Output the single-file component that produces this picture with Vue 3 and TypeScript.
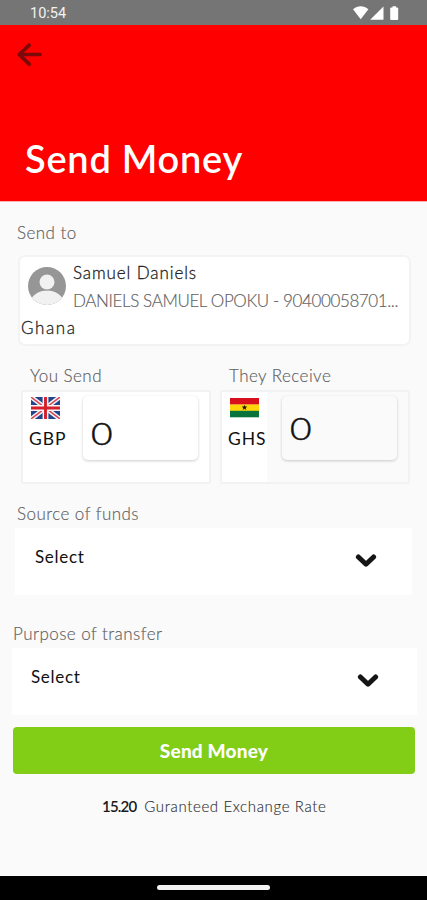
<script setup lang="ts">
import { ref } from 'vue'

interface Choice {
  id: string
  label: string
  value: string
}

const recipient = {
  name: 'Samuel Daniels',
  account: 'DANIELS SAMUEL OPOKU - 90400058701...',
  country: 'Ghana',
}
const sendAmount = ref('0')
const receiveAmount = ref('0')
const choices: Choice[] = [
  { id: 'source', label: 'Source of funds', value: 'Select' },
  { id: 'purpose', label: 'Purpose of transfer', value: 'Select' },
]
</script>

<template>
  <div class="screen">
    <div class="status">
      <span class="clock">10:54</span>
      <svg class="signals" width="50" height="16" viewBox="0 0 50 16">
        <path d="M0 4.200C4.500 0.200 10.900 0.200 15.400 4.200L7.700 14.200Z" />
        <path d="M30.500 1.500v13.200H17.200Z" />
        <path d="M39.500 1.300h3.500v1.200h1.200q1 0 1 1V14q0 1-1 1h-6q-1 0-1-1V3.500q0-1 1-1h1.300Z" />
      </svg>
    </div>

    <header class="header">
      <button class="back" aria-label="Back">
        <svg width="26" height="24" viewBox="0 0 26 24">
          <path d="M13.200 2.200L3.200 11.500L13.200 21.200M3.600 11.500H24" />
        </svg>
      </button>
      <h1 class="title"><span>Send Money</span></h1>
    </header>

    <main class="body">
      <div class="label send-to"><span>Send to</span></div>
      <section class="recipient">
        <div class="person">
          <svg class="avatar" width="38" height="38" viewBox="0 0 38 38">
            <defs><clipPath id="disc"><circle cx="19" cy="19" r="19" /></clipPath></defs>
            <g clip-path="url(#disc)">
              <rect width="38" height="38" fill="#969696" />
              <ellipse cx="19" cy="37" rx="17" ry="13.500" fill="#f1f1f1" />
              <circle cx="19" cy="15" r="8.500" fill="#969696" />
              <circle cx="19" cy="15" r="7.500" fill="#f1f1f1" />
            </g>
          </svg>
          <div class="details">
            <div class="name"><span>{{ recipient.name }}</span></div>
            <div class="account"><span>{{ recipient.account }}</span></div>
          </div>
        </div>
        <div class="country"><span>{{ recipient.country }}</span></div>
      </section>

      <div class="amounts">
        <section class="side">
          <div class="label amount-label"><span class="you">You Send</span></div>
          <div class="money">
            <div class="currency">
              <svg class="flag" width="29" height="22" viewBox="0 0 30 22" preserveAspectRatio="none">
                <rect width="30" height="22" fill="#21468f" />
                <path d="M0 0L30 22M30 0L0 22" stroke="#f4f4fa" stroke-width="4.600" />
                <path d="M0 0L30 22M30 0L0 22" stroke="#d64850" stroke-width="1.500" />
                <path d="M15 0V22M0 11H30" stroke="#f8f4f8" stroke-width="6" />
                <path d="M15 0V22M0 11H30" stroke="#d51f2b" stroke-width="3" />
              </svg>
              <span class="code gbp">GBP</span>
            </div>
            <div class="amount sent"><span class="figure">{{ sendAmount }}</span></div>
          </div>
        </section>
        <section class="side">
          <div class="label amount-label"><span class="they">They Receive</span></div>
          <div class="money receiving">
            <div class="currency">
              <svg class="flag" width="30" height="22" viewBox="0 0 30 22">
                <rect y="1" width="29" height="6.700" fill="#d8101c" />
                <rect y="7.500" width="29" height="6.500" fill="#ffd50a" />
                <rect y="13.800" width="29" height="6.500" fill="#08733b" />
                <path d="M14.500 7.900l.8 1.700h2l-1.600 1.300.6 2-1.800-1.200-1.800 1.200.6-2-1.600-1.300h2Z" fill="#1d1804" />
              </svg>
              <span class="code ghs">GHS</span>
            </div>
            <div class="amount received"><span class="figure">{{ receiveAmount }}</span></div>
          </div>
        </section>
      </div>

      <section v-for="choice in choices" :key="choice.id" class="choice" :class="choice.id">
        <div class="label"><span>{{ choice.label }}</span></div>
        <div class="select">
          <span class="value">{{ choice.value }}</span>
          <svg class="chevron" width="22" height="17" viewBox="0 0 22 17">
            <path d="M3.400 4L11 11.200L18.600 4" />
          </svg>
        </div>
      </section>

      <button class="submit"><span>Send Money</span></button>
      <p class="rate"><strong>15.20</strong><span>Guranteed Exchange Rate</span></p>
    </main>

    <footer class="nav"><i class="pill"></i></footer>
  </div>
</template>

<style>
body {
  margin: 0;
  background: #fafafa;
}
</style>

<style scoped>
.screen {
  width: 427px;
  height: 900px;
  display: flex;
  flex-direction: column;
  overflow: hidden;
  background: #fafafa;
  color: #111;
  font-family: Lato, "Liberation Sans", sans-serif;
  white-space: nowrap;
}
.screen * {
  box-sizing: border-box;
}
button {
  border: 0;
  padding: 0;
  background: none;
  font-family: inherit;
}
.status {
  height: 25px;
  flex: none;
  display: flex;
  justify-content: space-between;
  padding: 5px 24px 0 30px;
  background: #757575;
}
.clock {
  color: #f2f2f2;
  font: 14.500px/18px Roboto, sans-serif;
}
.signals {
  fill: #fff;
}
.header {
  height: 177px;
  flex: none;
  display: flex;
  flex-direction: column;
  justify-content: space-between;
  padding: 18px 16px 20px;
  background: #fe0000;
  border-bottom: 1px solid #ffb0b0;
}
.back {
  width: 26px;
  height: 24px;
}
.back svg {
  display: block;
  fill: none;
  stroke: #7c0808;
  stroke-width: 3.700;
  stroke-linecap: round;
  stroke-linejoin: round;
}
.title {
  margin: 0 0 0 9px;
  color: #fff;
  font-size: 38px;
  line-height: 46px;
  font-weight: 600;
  letter-spacing: 0.750px;
}
.body {
  flex: 1;
}
.label {
  height: 20px;
  color: #606060;
  font-size: 17px;
  font-weight: 300;
  line-height: 20px;
  letter-spacing: 0.450px;
  -webkit-text-stroke: 0.150px #606060;
}
.send-to {
  margin: 21px 0 12px 17px;
}
.recipient {
  width: 393px;
  height: 91px;
  margin-left: 18px;
  padding: 3px 2px;
  border: 2px solid #f3f3f3;
  border-radius: 7px;
  background: #fff;
}
.person {
  display: flex;
  gap: 7px;
  padding: 3px 0 0 6px;
}
.avatar {
  flex: none;
  margin-top: 4px;
}
.name,
.account {
  height: 28px;
  font-size: 17px;
  font-weight: 300;
  line-height: 20px;
}
.name {
  color: #222;
  letter-spacing: 0.900px;
  -webkit-text-stroke: 0.300px #222;
}
.account {
  color: #606060;
  letter-spacing: -0.390px;
  -webkit-text-stroke: 0.150px #606060;
}
.country {
  color: #222;
  font-size: 17px;
  font-weight: 300;
  line-height: 20px;
  margin: -1px 0 0 -1px;
  letter-spacing: 1.600px;
  -webkit-text-stroke: 0.300px #222;
}
.amounts {
  display: flex;
  gap: 9px;
  margin: 20px 0 0 21px;
}
.side {
  width: 190px;
}
.amount-label {
  margin: 0 0 4px 9px;
}
.money {
  height: 94px;
  display: flex;
  border: 2px solid #f2f2f2;
  border-radius: 2px;
  background: #fff;
}
.receiving {
  background: #fafafa;
}
.currency {
  width: 45px;
  height: 90px;
  flex: none;
  display: flex;
  flex-direction: column;
  padding: 5px 0 0 8px;
  background: #fff;
}
.code {
  margin: 10px 0 0 -2px;
  color: #111;
  font-size: 17.500px;
  line-height: 20px;
}
.gbp {
  letter-spacing: 1px;
}
.ghs {
  letter-spacing: 0.900px;
}
.amount {
  width: 115px;
  height: 64px;
  margin: 4px 0 0 15px;
  padding-left: 8px;
  border-radius: 5px;
  box-shadow: 0 1px 3px rgba(0, 0, 0, 0.2);
  color: #111;
  font-size: 31px;
  font-weight: 300;
  line-height: 74px;
}
.figure {
  display: inline-block;
  transform: scaleX(1.200);
  transform-origin: left;
  -webkit-text-stroke: 0.500px #111;
}
.received {
  line-height: 64px;
}
.choice {
  margin: 20px 15px 0;
}
.choice .label {
  margin: 0 0 4px 2px;
}
.select {
  height: 67px;
  display: flex;
  justify-content: space-between;
  padding: 19px 35px 0 20px;
  background: #fff;
}
.value {
  font-size: 17px;
  line-height: 20px;
  letter-spacing: 0.700px;
}
.chevron {
  margin-top: 6px;
  fill: none;
  stroke: #151515;
  stroke-width: 5;
  stroke-linecap: round;
  stroke-linejoin: round;
}
.purpose {
  margin: 29px 10px 0 12px;
}
.purpose .label {
  margin-left: 1px;
}
.purpose .select {
  padding: 19px 38px 0 19px;
}
.submit {
  display: block;
  width: 402px;
  height: 47px;
  margin: 12px 0 0 13px;
  border-radius: 4px;
  background: #82ce16;
  color: #fff;
  font-size: 19px;
  font-weight: 900;
  line-height: 46px;
  letter-spacing: 0.200px;
  text-align: center;
}
.rate {
  display: flex;
  gap: 8px;
  margin: 22px 0 0 102px;
  color: #333;
  font-size: 15px;
  font-weight: 300;
  line-height: 20px;
  letter-spacing: 0.630px;
  -webkit-text-stroke: 0.150px #333;
}
.rate strong {
  color: #1a1a1a;
  font-weight: 600;
  letter-spacing: -0.800px;
  -webkit-text-stroke: 0;
}
.nav {
  height: 24px;
  flex: none;
  display: flex;
  justify-content: center;
  padding-top: 9px;
  background: #000;
}
.pill {
  width: 113px;
  height: 5px;
  border-radius: 3px;
  background: #f2f2f2;
}
</style>
